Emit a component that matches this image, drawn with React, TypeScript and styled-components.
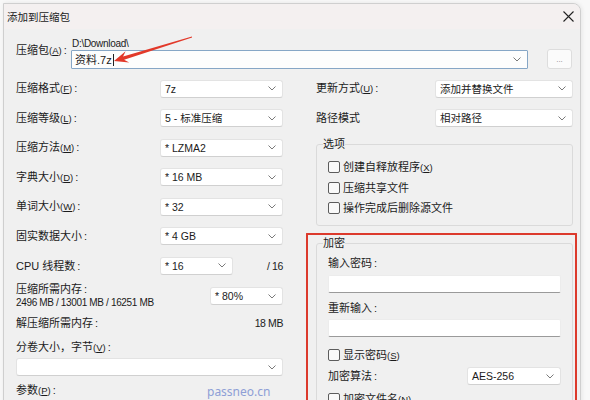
import React from "react";
import styled, { createGlobalStyle } from "styled-components";

const Global = createGlobalStyle`
  html, body { margin: 0; padding: 0; overflow: hidden; background: #f8f8f8; }
  body {
    font-family: "Liberation Sans", "Noto Sans CJK SC", sans-serif;
    font-size: 11px;
    color: #1b1b1b;
  }
  #root { width: 590px; height: 400px; position: relative; overflow: hidden; }
  * { box-sizing: border-box; }
`;

const Page = styled.div`
  position: relative;
  width: 590px;
  height: 400px;
  overflow: hidden;
`;

const Window = styled.div`
  margin: 3px 0 0 3px;
  width: 578px;
  height: 440px;
  background: #f0f0f0;
  border: 1px solid #cfcfcf;
  border-top-right-radius: 8px;
  box-shadow: 1px 0 4px rgba(0, 0, 0, 0.08);
  overflow: hidden;
`;

const TitleBar = styled.div`
  height: 25px;
  display: flex;
  align-items: center;
  justify-content: space-between;
  padding: 0 6px 0 3px;
  background: #f4f0f0;
`;

const Title = styled.span`
  font-size: 10.5px;
  line-height: 14px;
  color: #1a1a1a;
`;

const Close = styled.svg`
  width: 11px;
  height: 11px;
  display: block;
`;

const Body = styled.div`
  padding: 0 7px 0 12px;
`;

const ArchiveGrid = styled.div`
  margin-top: 8px;
  display: grid;
  grid-template-columns: 55px 457px 26px;
  grid-template-rows: 13px 19px;
  & > :nth-child(4) { margin-left: 19px; width: 25px; }
`;

const Label = styled.span`
  line-height: 14px;
  white-space: nowrap;
`;

const Mn = styled.span`
  font-family: "Liberation Sans", sans-serif;
  font-size: 9.5px;
  & u { text-underline-offset: 1px; }
`;

const Colon = styled.span`
  margin-left: 2px;
`;

const ArchiveLabel = styled(Label)`
  grid-row: 1 / 3;
  padding-top: 6px;
`;

const PathText = styled.span`
  font-size: 10px;
  letter-spacing: -0.3px;
  line-height: 13px;
  padding-left: 1px;
`;

const ArchiveInput = styled.div`
  grid-column: 2;
  grid-row: 2;
  display: flex;
  align-items: center;
  justify-content: space-between;
  height: 19px;
  padding: 0 6px 0 3px;
  background: #fdfdfd;
  border: 1px solid #86a6c6;
  border-radius: 1px;
  line-height: 14px;
`;

const Caret = styled.span`
  display: inline-block;
  width: 1px;
  height: 12px;
  margin-left: 1px;
  background: #222;
  vertical-align: -2px;
`;

const BrowseButton = styled.div`
  grid-column: 3;
  grid-row: 2;
  height: 20px;
  margin-top: -1px;
  display: flex;
  align-items: center;
  justify-content: center;
  background: #fbfbfb;
  border: 1px solid #dddddd;
  border-radius: 3px;
  font-size: 8px;
  color: #888;
`;

const Columns = styled.div`
  margin-top: 5px;
  display: grid;
  grid-template-columns: 267px 257px;
  column-gap: 33px;
  align-items: start;
`;

const Column = styled.div`
  display: flex;
  flex-direction: column;
`;

const FormRow = styled.div<{ $cols: string }>`
  height: 29.5px;
  display: grid;
  grid-template-columns: ${(p) => p.$cols};
  align-items: center;
`;

const SelectBox = styled.div<{ $w?: number }>`
  width: ${(p) => (p.$w ? `${p.$w}px` : "100%")};
  height: 18px;
  display: flex;
  align-items: center;
  justify-content: space-between;
  padding: 0 6px 0 4px;
  background: #ffffff;
  border: 1px solid #e3e3e3;
  border-bottom-color: #d0d0d0;
  border-radius: 3px;
  font-size: 10.5px;
  line-height: 14px;
  white-space: nowrap;
`;

const NumText = styled.span`
  font-size: 10.5px;
  letter-spacing: -0.4px;
  line-height: 14px;
  white-space: nowrap;
`;

const RightNum = styled(NumText)`
  text-align: right;
`;

const Chevron = () => (
  <svg width="8" height="5" viewBox="0 0 8 5" style={{ display: "block", flex: "none" }}>
    <path d="M0.5 0.5 L4 4 L7.5 0.5" fill="none" stroke="#7a7a7a" strokeWidth="1" />
  </svg>
);

const Combo = ({ value, width }: { value: string; width?: number }) => (
  <SelectBox $w={width}>
    <span>{value}</span>
    <Chevron />
  </SelectBox>
);

const Lbl = ({ text, mn }: { text: string; mn?: string }) => (
  <>
    {text}
    {mn && (
      <Mn>
        (<u>{mn}</u>)
      </Mn>
    )}
    <Colon>:</Colon>
  </>
);

const MemoryBlock = styled.div`
  margin-top: 1.5px;
  display: grid;
  grid-template-columns: 194px 73px;
  grid-template-rows: 14px 14px;
  align-items: center;
  & > :last-child { grid-column: 2; grid-row: 1 / 3; }
`;

const SmallText = styled.span`
  font-size: 10px;
  letter-spacing: -0.35px;
  line-height: 14px;
  white-space: nowrap;
`;

const DecompRow = styled.div`
  height: 26px;
  display: flex;
  align-items: center;
  justify-content: space-between;
  line-height: 14px;
`;

const StackLabel = styled(Label)<{ $mt: number }>`
  display: block;
  margin-top: ${(p) => p.$mt}px;
`;

const WideCombo = styled.div`
  margin-top: 3px;
`;

const GroupBox = styled.fieldset<{ $mt: number }>`
  margin: ${(p) => p.$mt}px 0 0;
  padding: 0;
  min-width: 0;
  border: 1px solid #dadada;
  border-radius: 3px;
`;

const Legend = styled.legend`
  margin-left: 6px;
  padding: 0;
  line-height: 14px;
`;

const GroupInner = styled.div<{ $pt: number; $pb: number }>`
  padding: ${(p) => p.$pt}px 11px ${(p) => p.$pb}px;
  display: flex;
  flex-direction: column;
`;

const CheckRow = styled.div<{ $h?: number; $mt?: number }>`
  height: ${(p) => p.$h ?? 20.5}px;
  margin-top: ${(p) => p.$mt ?? 0}px;
  display: flex;
  align-items: center;
  gap: 3px;
  line-height: 14px;
  white-space: nowrap;
`;

const Box = styled.span`
  width: 12px;
  height: 12px;
  flex: none;
  border: 1px solid #5c5c5c;
  border-radius: 2px;
  background: #f9f9f9;
`;

const RedFrame = styled.div`
  margin: 7px -4px 0 -10px;
  padding: 1.5px 2px 0 8px;
  border: 2px solid #dc3a2c;
  border-bottom: none;
  border-radius: 1px;
`;

const TextField = styled.div<{ $mt: number }>`
  margin-top: ${(p) => p.$mt}px;
  height: 18px;
  background: #ffffff;
  border: 1px solid #ececec;
  border-bottom-color: #9a9a9a;
  border-radius: 2px;
`;

const AlgoRow = styled.div`
  height: 22px;
  display: flex;
  align-items: center;
  justify-content: space-between;
  line-height: 14px;
`;

const Overlay = styled.svg`
  position: absolute;
  left: 0;
  top: 0;
  width: 590px;
  height: 400px;
  pointer-events: none;
`;

const Watermark = styled.span`
  position: absolute;
  left: 207px;
  top: 384px;
  font-family: "Noto Sans", sans-serif;
  font-size: 12px;
  line-height: 16px;
  color: #8e9fd6;
  pointer-events: none;
`;

const Check = ({ children, h, mt }: { children: React.ReactNode; h?: number; mt?: number }) => (
  <CheckRow $h={h} $mt={mt}>
    <Box />
    <span>{children}</span>
  </CheckRow>
);

export default function App() {
  return (
    <Page>
      <Global />
      <Window>
        <TitleBar>
          <Title>添加到压缩包</Title>
          <Close viewBox="0 0 11 11">
            <path d="M0.5 0.5 L10.5 10.5 M10.5 0.5 L0.5 10.5" stroke="#222" strokeWidth="1.1" />
          </Close>
        </TitleBar>
        <Body>
          <ArchiveGrid>
            <ArchiveLabel>
              <Lbl text="压缩包" mn="A" />
            </ArchiveLabel>
            <PathText>D:\Download\</PathText>
            <ArchiveInput>
              <span>
                资料.7z
                <Caret />
              </span>
              <Chevron />
            </ArchiveInput>
            <BrowseButton>...</BrowseButton>
          </ArchiveGrid>

          <Columns>
            <Column>
              <FormRow $cols="144px 123px">
                <Label><Lbl text="压缩格式" mn="F" /></Label>
                <Combo value="7z" />
              </FormRow>
              <FormRow $cols="144px 123px">
                <Label><Lbl text="压缩等级" mn="L" /></Label>
                <Combo value="5 - 标准压缩" />
              </FormRow>
              <FormRow $cols="144px 123px">
                <Label><Lbl text="压缩方法" mn="M" /></Label>
                <Combo value="* LZMA2" />
              </FormRow>
              <FormRow $cols="144px 123px">
                <Label><Lbl text="字典大小" mn="D" /></Label>
                <Combo value="* 16 MB" />
              </FormRow>
              <FormRow $cols="144px 123px">
                <Label><Lbl text="单词大小" mn="W" /></Label>
                <Combo value="* 32" />
              </FormRow>
              <FormRow $cols="144px 123px">
                <Label><Lbl text="固实数据大小" /></Label>
                <Combo value="* 4 GB" />
              </FormRow>
              <FormRow $cols="144px 73px 1fr">
                <Label><Lbl text="CPU 线程数" /></Label>
                <Combo value="* 16" />
                <RightNum>/ 16</RightNum>
              </FormRow>
              <MemoryBlock>
                <Label><Lbl text="压缩所需内存" /></Label>
                <SmallText>2496 MB / 13001 MB / 16251 MB</SmallText>
                <Combo value="* 80%" />
              </MemoryBlock>
              <DecompRow>
                <span><Lbl text="解压缩所需内存" /></span>
                <NumText>18 MB</NumText>
              </DecompRow>
              <StackLabel $mt={4}><Lbl text="分卷大小，字节" mn="V" /></StackLabel>
              <WideCombo>
                <Combo value="" />
              </WideCombo>
              <StackLabel $mt={7}><Lbl text="参数" mn="P" /></StackLabel>
            </Column>

            <Column>
              <FormRow $cols="119px 138px">
                <Label><Lbl text="更新方式" mn="U" /></Label>
                <Combo value="添加并替换文件" />
              </FormRow>
              <FormRow $cols="119px 138px">
                <Label>路径模式</Label>
                <Combo value="相对路径" />
              </FormRow>
              <GroupBox $mt={4}>
                <Legend>选项</Legend>
                <GroupInner $pt={6} $pb={6}>
                  <Check>创建自释放程序<Mn>(<u>X</u>)</Mn></Check>
                  <Check>压缩共享文件</Check>
                  <Check>操作完成后删除源文件</Check>
                </GroupInner>
              </GroupBox>
              <RedFrame>
                <GroupBox $mt={0}>
                  <Legend>加密</Legend>
                  <GroupInner $pt={6} $pb={10}>
                    <StackLabel $mt={0}><Lbl text="输入密码" /></StackLabel>
                    <TextField $mt={5} />
                    <StackLabel $mt={8}><Lbl text="重新输入" /></StackLabel>
                    <TextField $mt={4} />
                    <Check h={20} mt={8}>显示密码<Mn>(<u>S</u>)</Mn></Check>
                    <AlgoRow>
                      <span><Lbl text="加密算法" /></span>
                      <Combo value="AES-256" width={94} />
                    </AlgoRow>
                    <Check h={20} mt={2}>加密文件名<Mn>(<u>N</u>)</Mn></Check>
                  </GroupInner>
                </GroupBox>
              </RedFrame>
            </Column>
          </Columns>
        </Body>
      </Window>

      <Overlay viewBox="0 0 590 400">
        <polygon
          points="114,61 129.2,62.6 124.1,59.8 192.1,37.5 191.9,36.5 123.1,56.4 125.6,51.2"
          fill="#e2392a"
        />
      </Overlay>
      <Watermark>passneo.cn</Watermark>
    </Page>
  );
}
